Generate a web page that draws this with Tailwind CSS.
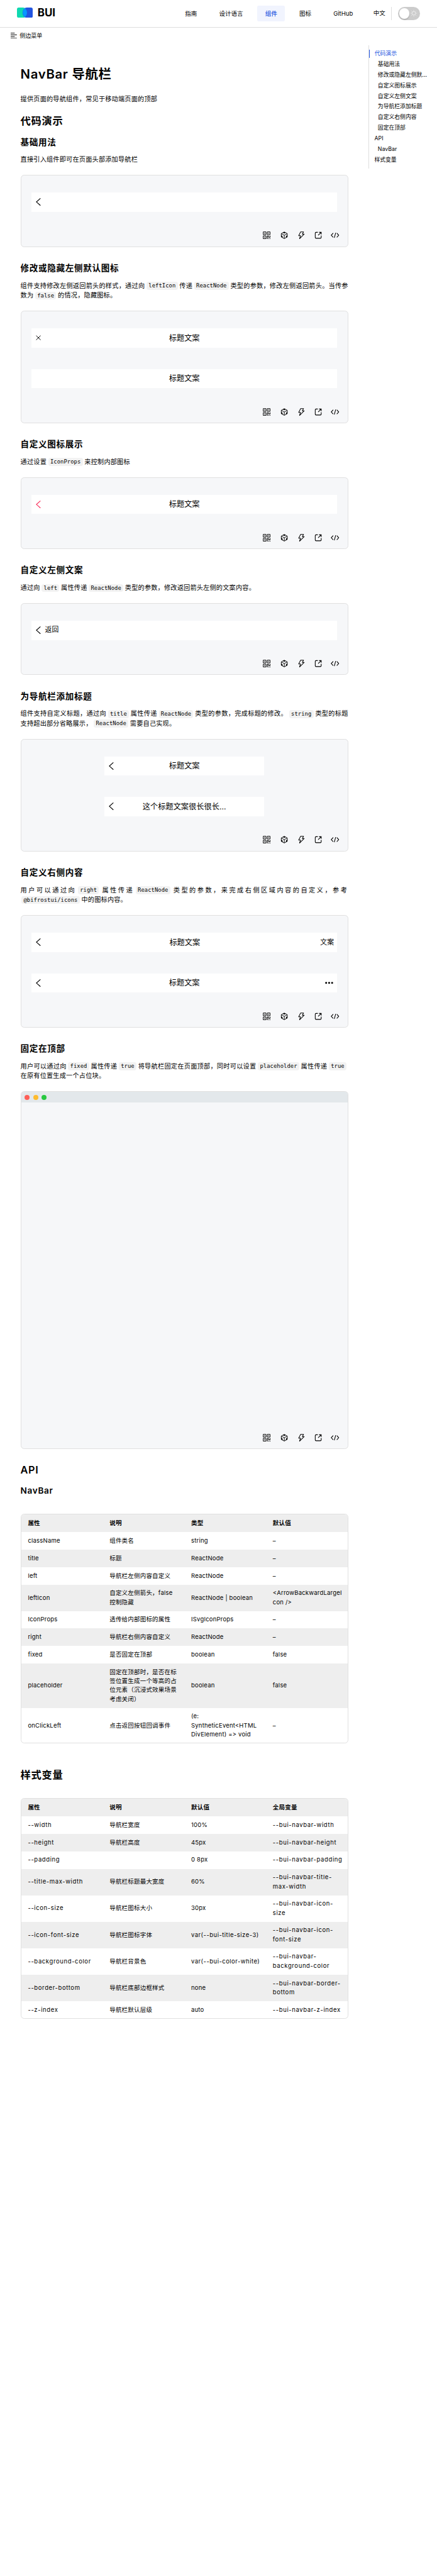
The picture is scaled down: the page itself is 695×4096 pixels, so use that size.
<!DOCTYPE html>
<html lang="zh-CN">
<head>
<meta charset="utf-8">
<title>NavBar 导航栏</title>
<script src="https://cdn.jsdelivr.net/npm/@tailwindcss/browser@4"></script>
</head>
<body class="bg-white overflow-hidden">
<svg class="hidden">
  <symbol id="back" viewBox="0 0 12 18"><path d="M10.8 .6 1.4 9l9.4 8.4" fill="none" stroke="currentColor" stroke-width="1.7"/></symbol>
  <symbol id="qr" viewBox="0 0 18 18"><path d="M1 1h6.5v6.5H1zM10.500 1H17v6.500h-6.500zM1 10.500h6.500V17H1z" fill="none" stroke="currentColor" stroke-width="1.400"/><path d="M3.400 3.400h1.800v1.800H3.400zM12.800 3.400h1.800v1.800h-1.800zM3.400 12.800h1.800v1.800H3.400zM9.800 9.800h1.500V17.700H9.800zM11 9.800h3v3h2.200V9.800h1.500v4.700h-5V11.500H11zM12.800 16.200h1.600v1.500h-1.600zM16 16.200h1.700v1.500H16z" fill="currentColor"/></symbol>
  <symbol id="cube" viewBox="0 0 18 18"><path d="M9 1.200 16 5v8L9 16.800 2 13V5zM2.300 5.200 9 9l6.700-3.800M9 9v7.500" fill="none" stroke="currentColor" stroke-width="1.400" stroke-linejoin="round"/><path d="M5.800 3 9 1 12.200 3 9 4.800zM2 9l3 1.900V14.600L2 13zM16 9l-3 1.900V14.600l3-1.600z" fill="currentColor"/></symbol>
  <symbol id="bolt" viewBox="0 0 18 18"><path d="M7.500 1h7l-3 5.200H16L5 17l2.200-7H3z" fill="none" stroke="currentColor" stroke-width="1.500" stroke-linejoin="round"/></symbol>
  <symbol id="open" viewBox="0 0 18 18"><path d="M8 2H4a2 2 0 0 0-2 2v10a2 2 0 0 0 2 2h10a2 2 0 0 0 2-2V9.500M11 2h5v5M16 2 8.800 9.200" fill="none" stroke="currentColor" stroke-width="1.600"/></symbol>
  <symbol id="code" viewBox="0 0 20 18"><path d="M5.800 4 1.200 9l4.600 5M14.200 4l4.600 5-4.600 5M11.600 3 8.400 15" fill="none" stroke="currentColor" stroke-width="1.600"/></symbol>
</svg>
<div class="[zoom:0.6786] w-[1024px] h-[6037px] bg-white text-black font-['Inter','Noto_Sans_CJK_SC',sans-serif] text-[15px]">
  <header class="h-[65px] border-b border-[#dedede] flex items-center pl-[40px] pr-[40px]">
    <svg class="w-[37px] h-[24px] -mt-[4px]" viewBox="0 0 37 24"><path d="M4 0h10a10 12 0 0 1 0 24H4a4 4 0 0 1-4-4V4a4 4 0 0 1 4-4z" fill="#0fd9b0"/><path d="M33 0H23a10 12 0 0 0 0 24h10a4 4 0 0 0 4-4V4a4 4 0 0 0-4-4z" fill="#2355e0"/><path d="M18.500 2a11 12 0 0 1 0 20 11 12 0 0 1 0-20z" fill="#0797ff"/></svg>
    <span class="ml-[11px] -mt-[4px] text-[25px] leading-[30px] font-bold">BUI</span>
    <nav class="ml-auto flex items-center gap-[16px] text-[14px] leading-[38px]">
      <a class="px-[18px]">指南</a>
      <a class="px-[18px]">设计语言</a>
      <a class="px-[18px] rounded-[4px] bg-[#f1f4fe] text-[#2355e0] font-medium">组件</a>
      <a class="px-[18px]">图标</a>
      <a class="pl-[18px]">GitHub</a>
    </nav>
    <span class="ml-[48px] text-[14px]">中文</span>
    <span class="ml-[14px] w-px h-[30px] bg-[#dedede]"></span>
    <span class="ml-[15px] w-[51px] h-[30px] rounded-full bg-[#ccc] flex items-center pl-[3px]">
      <span class="w-[24px] h-[24px] rounded-full bg-white shadow-[0_2px_3px_rgba(0,0,0,0.2)]"></span>
      <svg class="ml-[3px] w-[15px] h-[15px]" viewBox="0 0 16 16" fill="none" stroke="#fff" stroke-width="1"><circle cx="8" cy="8" r="4.500"/><path d="M8 0v2M8 14v2M0 8h2M14 8h2M2.300 2.300l1.300 1.300M12.400 12.400l1.300 1.300M2.300 13.700l1.300-1.300M12.400 3.600l1.300-1.300"/></svg>
    </span>
  </header>
  <div class="h-[36px] flex items-center pl-[25px] text-[13.3px]">
    <svg class="w-[15px] h-[14px] mr-[6px]" viewBox="0 0 15 14" stroke="#000" stroke-width="1.400"><path d="M0 1h9.500M0 5h14.500M0 9h9.500M0 13h14.500"/></svg>侧边菜单
  </div>
  <div class="flex items-start">
    <main class="ml-[48px] w-[768px] tracking-[0.3px] leading-[23px] [&_p]:h-[23px] [&_code]:mx-[4px] [&_code]:px-[4.8px] [&_code]:py-[2px] [&_code]:rounded-[5px] [&_code]:bg-[#f2f2f2] [&_code]:text-[13px] [&_code]:leading-[13px] [&_code]:tracking-[0.1px] [&_code]:font-['DejaVu_Sans_Mono',monospace]">
      <h1 class="mt-[52px] text-[30px] leading-[40px] font-semibold tracking-[1px]">NavBar 导航栏</h1>
      <p class="mt-[27.5px]">提供页面的导航组件，常见于移动端页面的顶部</p>
      <h2 class="mt-[25.5px] h-[32px] text-[24px] leading-[32px] font-semibold tracking-[1px]">代码演示</h2>

      <section>
        <h3 class="mt-[18.5px] h-[28px] text-[20px] leading-[28px] font-semibold tracking-[1px]">基础用法</h3>
        <p class="mt-[15.6px]">直接引入组件即可在页面头部添加导航栏</p>
        <div class="mt-[24px] h-[168.5px] rounded-[8px] border border-[#e0e0e0] bg-[#f6f7f9] px-[24px] pt-[40px] flex flex-col">
          <div class="h-[45px] bg-white flex items-center px-[10px]"><svg class="w-[12px] h-[18px]"><use href="#back"/></svg></div>
          <div class="mt-auto mb-[16px] -mr-[4px] flex justify-end gap-[22px]"><svg class="size-[18px]"><use href="#qr"/></svg><svg class="size-[18px]"><use href="#cube"/></svg><svg class="size-[18px]"><use href="#bolt"/></svg><svg class="size-[18px]"><use href="#open"/></svg><svg class="w-[20px] h-[18px] -mx-px"><use href="#code"/></svg></div>
        </div>
      </section>

      <section>
        <h3 class="mt-[36px] h-[28px] text-[20px] leading-[28px] font-semibold tracking-[1px]">修改或隐藏左侧默认图标</h3>
        <div class="mt-[15.6px]">
          <p class="whitespace-nowrap [text-align-last:justify]">组件支持修改左侧返回箭头的样式，通过向<code>leftIcon</code>传递<code>ReactNode</code>类型的参数，修改左侧返回箭头。当传参</p>
          <p>数为<code>false</code>的情况，隐藏图标。</p>
        </div>
        <div class="mt-[24px] h-[263.5px] rounded-[8px] border border-[#e0e0e0] bg-[#f6f7f9] px-[24px] pt-[40px] flex flex-col">
          <div class="h-[45px] bg-white grid grid-cols-3 items-center px-[10px]"><svg class="w-[12px] h-[12px]" viewBox="0 0 12 12" stroke="#000" stroke-width="1.400"><path d="m.8 1 10.400 10M11.200 1 .8 11"/></svg><span class="text-center text-[18px] tracking-normal">标题文案</span></div>
          <div class="mt-[50px] h-[45px] bg-white flex items-center justify-center"><span class="text-[18px] tracking-normal">标题文案</span></div>
          <div class="mt-auto mb-[16px] -mr-[4px] flex justify-end gap-[22px]"><svg class="size-[18px]"><use href="#qr"/></svg><svg class="size-[18px]"><use href="#cube"/></svg><svg class="size-[18px]"><use href="#bolt"/></svg><svg class="size-[18px]"><use href="#open"/></svg><svg class="w-[20px] h-[18px] -mx-px"><use href="#code"/></svg></div>
        </div>
      </section>

      <section>
        <h3 class="mt-[36px] h-[28px] text-[20px] leading-[28px] font-semibold tracking-[1px]">自定义图标展示</h3>
        <p class="mt-[15.6px]">通过设置<code>IconProps</code>来控制内部图标</p>
        <div class="mt-[24px] h-[168.5px] rounded-[8px] border border-[#e0e0e0] bg-[#f6f7f9] px-[24px] pt-[40px] flex flex-col">
          <div class="h-[45px] bg-white grid grid-cols-3 items-center px-[10px]"><svg class="w-[12px] h-[18px] text-[#fa2d5a]"><use href="#back"/></svg><span class="text-center text-[18px] tracking-normal">标题文案</span></div>
          <div class="mt-auto mb-[16px] -mr-[4px] flex justify-end gap-[22px]"><svg class="size-[18px]"><use href="#qr"/></svg><svg class="size-[18px]"><use href="#cube"/></svg><svg class="size-[18px]"><use href="#bolt"/></svg><svg class="size-[18px]"><use href="#open"/></svg><svg class="w-[20px] h-[18px] -mx-px"><use href="#code"/></svg></div>
        </div>
      </section>

      <section>
        <h3 class="mt-[36px] h-[28px] text-[20px] leading-[28px] font-semibold tracking-[1px]">自定义左侧文案</h3>
        <p class="mt-[15.6px]">通过向<code>left</code>属性传递<code>ReactNode</code>类型的参数，修改返回箭头左侧的文案内容。</p>
        <div class="mt-[24px] h-[168.5px] rounded-[8px] border border-[#e0e0e0] bg-[#f6f7f9] px-[24px] pt-[40px] flex flex-col">
          <div class="h-[45px] bg-white flex items-center px-[10px]"><svg class="w-[12px] h-[18px]"><use href="#back"/></svg><span class="ml-[10px] text-[16px] tracking-normal">返回</span></div>
          <div class="mt-auto mb-[16px] -mr-[4px] flex justify-end gap-[22px]"><svg class="size-[18px]"><use href="#qr"/></svg><svg class="size-[18px]"><use href="#cube"/></svg><svg class="size-[18px]"><use href="#bolt"/></svg><svg class="size-[18px]"><use href="#open"/></svg><svg class="w-[20px] h-[18px] -mx-px"><use href="#code"/></svg></div>
        </div>
      </section>

      <section>
        <h3 class="mt-[36px] h-[28px] text-[20px] leading-[28px] font-semibold tracking-[1px]">为导航栏添加标题</h3>
        <div class="mt-[15.6px]">
          <p class="whitespace-nowrap [text-align-last:justify]">组件支持自定义标题，通过向<code>title</code>属性传递<code>ReactNode</code>类型的参数，完成标题的修改。<code>string</code>类型的标题</p>
          <p>支持超出部分省略展示，<code>ReactNode</code>需要自己实现。</p>
        </div>
        <div class="mt-[24px] h-[263.5px] rounded-[8px] border border-[#e0e0e0] bg-[#f6f7f9] px-[24px] pt-[40px] flex flex-col">
          <div class="mx-auto w-[375px] h-[45px] bg-white grid grid-cols-[1fr_auto_1fr] items-center px-[10px]"><svg class="w-[12px] h-[18px]"><use href="#back"/></svg><span class="text-center text-[18px] tracking-normal">标题文案</span></div>
          <div class="mx-auto mt-[50px] w-[375px] h-[45px] bg-white grid grid-cols-[1fr_auto_1fr] items-center px-[10px]"><svg class="w-[12px] h-[18px]"><use href="#back"/></svg><span class="text-center text-[18px] tracking-normal">这个标题文案很长很长...</span></div>
          <div class="mt-auto mb-[16px] -mr-[4px] flex justify-end gap-[22px]"><svg class="size-[18px]"><use href="#qr"/></svg><svg class="size-[18px]"><use href="#cube"/></svg><svg class="size-[18px]"><use href="#bolt"/></svg><svg class="size-[18px]"><use href="#open"/></svg><svg class="w-[20px] h-[18px] -mx-px"><use href="#code"/></svg></div>
        </div>
      </section>

      <section>
        <h3 class="mt-[36px] h-[28px] text-[20px] leading-[28px] font-semibold tracking-[1px]">自定义右侧内容</h3>
        <div class="mt-[15.6px]">
          <p class="whitespace-nowrap tracking-[3.7px]">用户可以通过向<code>right</code><span class="ml-[3.500px]">属性传递</span><code>ReactNode</code><span class="ml-[3.500px]">类型的参数，来完成右侧区域内容的自定义，参考</span></p>
          <p class="-ml-[1.500px]"><code>@bifrostui/icons</code>中的图标内容。</p>
        </div>
        <div class="mt-[24px] h-[263.5px] rounded-[8px] border border-[#e0e0e0] bg-[#f6f7f9] px-[24px] pt-[40px] flex flex-col">
          <div class="h-[45px] bg-white grid grid-cols-3 items-center pl-[10px] pr-[8px]"><svg class="w-[12px] h-[18px]"><use href="#back"/></svg><span class="text-center text-[18px] tracking-normal">标题文案</span><span class="text-right text-[16px] tracking-normal">文案</span></div>
          <div class="mt-[50px] h-[45px] bg-white grid grid-cols-3 items-center px-[10px]"><svg class="w-[12px] h-[18px]"><use href="#back"/></svg><span class="text-center text-[18px] tracking-normal">标题文案</span><svg class="justify-self-end w-[19px] h-[5px]" viewBox="0 0 19 5"><circle cx="2.500" cy="2.500" r="2.300"/><circle cx="9.500" cy="2.500" r="2.300"/><circle cx="16.500" cy="2.500" r="2.300"/></svg></div>
          <div class="mt-auto mb-[16px] -mr-[4px] flex justify-end gap-[22px]"><svg class="size-[18px]"><use href="#qr"/></svg><svg class="size-[18px]"><use href="#cube"/></svg><svg class="size-[18px]"><use href="#bolt"/></svg><svg class="size-[18px]"><use href="#open"/></svg><svg class="w-[20px] h-[18px] -mx-px"><use href="#code"/></svg></div>
        </div>
      </section>

      <section>
        <h3 class="mt-[36px] h-[28px] text-[20px] leading-[28px] font-semibold tracking-[1px]">固定在顶部</h3>
        <div class="mt-[15.6px]">
          <p class="whitespace-nowrap [text-align-last:justify]">用户可以通过向<code>fixed</code>属性传递<code>true</code>将导航栏固定在页面顶部，同时可以设置<code>placeholder</code>属性传递<code>true</code></p>
          <p>在原有位置生成一个占位块。</p>
        </div>
        <div class="mt-[24px] h-[837.500px] rounded-[8px] border border-[#e0e0e0] bg-[#f6f7f9] overflow-hidden flex flex-col">
          <div class="h-[25px] bg-[#e3e8eb] flex items-center gap-[8px] pl-[8px]"><i class="size-[12px] rounded-full bg-[#fe5f57]"></i><i class="size-[12px] rounded-full bg-[#febc2e]"></i><i class="size-[12px] rounded-full bg-[#27c840]"></i></div>
          <div class="mt-auto mb-[16px] mr-[20px] flex justify-end gap-[22px]"><svg class="size-[18px]"><use href="#qr"/></svg><svg class="size-[18px]"><use href="#cube"/></svg><svg class="size-[18px]"><use href="#bolt"/></svg><svg class="size-[18px]"><use href="#open"/></svg><svg class="w-[20px] h-[18px] -mx-px"><use href="#code"/></svg></div>
        </div>
      </section>

      <h2 class="mt-[35px] h-[32px] text-[24px] leading-[32px] font-semibold tracking-[1px]">API</h2>
      <h3 class="mt-[18px] h-[28px] text-[20px] leading-[28px] font-semibold tracking-[1px]">NavBar</h3>
      <div class="mt-[40px] h-[538px] rounded-[8px] border border-[#e0e0e0] overflow-hidden text-[14px] leading-[21px]">
        <div class="grid grid-cols-4 items-center h-[41px] bg-[#eee] font-semibold *:px-[16px]"><div>属性</div><div>说明</div><div>类型</div><div>默认值</div></div>
        <div class="grid grid-cols-4 items-center h-[41px] *:px-[16px]"><div>className</div><div>组件类名</div><div>string</div><div>–</div></div>
        <div class="grid grid-cols-4 items-center h-[41px] bg-[#eee] *:px-[16px]"><div>title</div><div>标题</div><div>ReactNode</div><div>–</div></div>
        <div class="grid grid-cols-4 items-center h-[41px] *:px-[16px]"><div>left</div><div>导航栏左侧内容自定义</div><div>ReactNode</div><div>–</div></div>
        <div class="grid grid-cols-4 items-center h-[62px] bg-[#eee] *:px-[16px] whitespace-nowrap"><div>leftIcon</div><div>自定义左侧箭头，false<br>控制隐藏</div><div>ReactNode | boolean</div><div>&lt;ArrowBackwardLargeI<br>con /&gt;</div></div>
        <div class="grid grid-cols-4 items-center h-[41px] *:px-[16px]"><div>IconProps</div><div>透传给内部图标的属性</div><div>ISvgIconProps</div><div>–</div></div>
        <div class="grid grid-cols-4 items-center h-[41px] bg-[#eee] *:px-[16px]"><div>right</div><div>导航栏右侧内容自定义</div><div>ReactNode</div><div>–</div></div>
        <div class="grid grid-cols-4 items-center h-[41px] *:px-[16px]"><div>fixed</div><div>是否固定在顶部</div><div>boolean</div><div>false</div></div>
        <div class="grid grid-cols-4 items-center h-[104px] bg-[#eee] *:px-[16px] whitespace-nowrap"><div>placeholder</div><div>固定在顶部时，是否在标<br>签位置生成一个等高的占<br>位元素（沉浸式效果场景<br>考虑关闭）</div><div>boolean</div><div>false</div></div>
        <div class="grid grid-cols-4 items-center h-[83px] *:px-[16px] whitespace-nowrap"><div>onClickLeft</div><div>点击返回按钮回调事件</div><div>(e:<br>SyntheticEvent&lt;HTML<br>DivElement) =&gt; void</div><div>–</div></div>
      </div>

      <h2 class="mt-[58px] h-[32px] text-[24px] leading-[32px] font-semibold tracking-[1px]">样式变量</h2>
      <div class="mt-[38px] h-[517px] rounded-[8px] border border-[#e0e0e0] overflow-hidden text-[14px] leading-[21px] whitespace-nowrap">
        <div class="grid grid-cols-4 items-center h-[41px] bg-[#eee] font-semibold *:px-[16px]"><div>属性</div><div>说明</div><div>默认值</div><div>全局变量</div></div>
        <div class="grid grid-cols-4 items-center h-[41px] *:px-[16px]"><div class="tracking-[0.9px]">--width</div><div>导航栏宽度</div><div>100%</div><div class="tracking-[0.9px]">--bui-navbar-width</div></div>
        <div class="grid grid-cols-4 items-center h-[41px] bg-[#eee] *:px-[16px]"><div class="tracking-[0.9px]">--height</div><div>导航栏高度</div><div>45px</div><div class="tracking-[0.9px]">--bui-navbar-height</div></div>
        <div class="grid grid-cols-4 items-center h-[41px] *:px-[16px]"><div class="tracking-[0.9px]">--padding</div><div></div><div>0 8px</div><div class="tracking-[0.9px]">--bui-navbar-padding</div></div>
        <div class="grid grid-cols-4 items-center h-[62px] bg-[#eee] *:px-[16px]"><div class="tracking-[0.9px]">--title-max-width</div><div>导航栏标题最大宽度</div><div>60%</div><div class="tracking-[0.9px]">--bui-navbar-title-<br>max-width</div></div>
        <div class="grid grid-cols-4 items-center h-[62px] *:px-[16px]"><div class="tracking-[0.9px]">--icon-size</div><div>导航栏图标大小</div><div>30px</div><div class="tracking-[0.9px]">--bui-navbar-icon-<br>size</div></div>
        <div class="grid grid-cols-4 items-center h-[62px] bg-[#eee] *:px-[16px]"><div class="tracking-[0.9px]">--icon-font-size</div><div>导航栏图标字体</div><div class="tracking-[0.7px]">var(--bui-title-size-3)</div><div class="tracking-[0.9px]">--bui-navbar-icon-<br>font-size</div></div>
        <div class="grid grid-cols-4 items-center h-[62px] *:px-[16px]"><div class="tracking-[0.9px]">--background-color</div><div>导航栏背景色</div><div class="tracking-[0.7px]">var(--bui-color-white)</div><div class="tracking-[0.9px]">--bui-navbar-<br>background-color</div></div>
        <div class="grid grid-cols-4 items-center h-[62px] bg-[#eee] *:px-[16px]"><div class="tracking-[0.9px]">--border-bottom</div><div>导航栏底部边框样式</div><div>none</div><div class="tracking-[0.9px]">--bui-navbar-border-<br>bottom</div></div>
        <div class="grid grid-cols-4 items-center h-[41px] *:px-[16px]"><div class="tracking-[0.9px]">--z-index</div><div>导航栏默认层级</div><div>auto</div><div class="tracking-[0.9px]">--bui-navbar-z-index</div></div>
      </div>
    </main>
    <aside class="ml-[48px] mt-[5px] w-[140px] h-[289px] border-l border-[#dedede] pt-[7px] text-[13px] leading-[19px]">
      <ul class="flex flex-col gap-[6px] pt-[3px] -ml-px *:pl-[21px] *:h-[19px]">
        <li class="border-l border-[#2355e0] !pl-[12px] text-[#2355e0]">代码演示</li>
        <li>基础用法</li>
        <li>修改或隐藏左侧默...</li>
        <li>自定义图标展示</li>
        <li>自定义左侧文案</li>
        <li>为导航栏添加标题</li>
        <li>自定义右侧内容</li>
        <li>固定在顶部</li>
        <li class="!pl-[13px]">API</li>
        <li>NavBar</li>
        <li class="!pl-[13px]">样式变量</li>
      </ul>
    </aside>
  </div>
</div>
</body>
</html>
